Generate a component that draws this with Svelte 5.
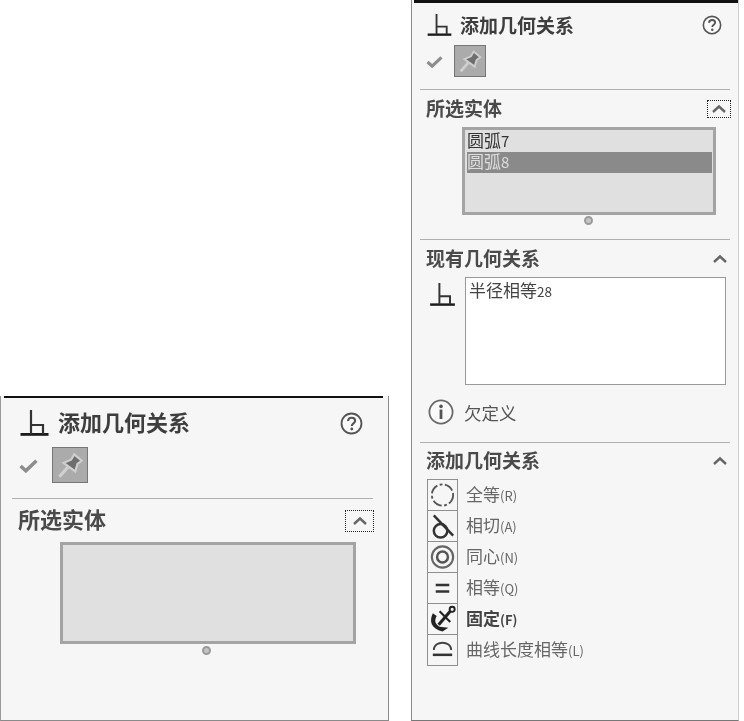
<script>
  const relations = [
    { key: 'coincident', label: '全等', hot: '(R)' },
    { key: 'tangent', label: '相切', hot: '(A)' },
    { key: 'concentric', label: '同心', hot: '(N)' },
    { key: 'equal', label: '相等', hot: '(Q)' },
    { key: 'fix', label: '固定', hot: '(F)', strong: true },
    { key: 'arc', label: '曲线长度相等', hot: '(L)' },
  ];
</script>

{#snippet relIcon()}
  <svg class="rel-icon" viewBox="0 0 28 26">
    <path d="M0 24.4H28" stroke="#1c1c1c" stroke-width="2.8" fill="none" />
    <path d="M10.5 0V24M10.5 15H22.5V24" stroke="#333" stroke-width="2.2" fill="none" />
  </svg>
{/snippet}

{#snippet helpIcon()}
  <svg class="help" viewBox="0 0 24 24">
    <circle cx="12" cy="12" r="10.4" fill="#fafafa" stroke="#555" stroke-width="1.9" />
    <path d="M8.4 9.4C8.6 7 10.2 6 12.1 6c2.2 0 3.7 1.3 3.7 3.1 0 2.6-3.5 2.8-3.5 5.4" fill="none" stroke="#555" stroke-width="2.2" />
    <circle cx="12.3" cy="17.8" r="1.5" fill="#555" />
  </svg>
{/snippet}

{#snippet actions()}
  <div class="actions">
    <svg class="check" viewBox="0 0 18 14">
      <path d="M1.5 7.5L6.5 12L16.5 2.5" fill="none" stroke="#8d8d8d" stroke-width="3.4" />
    </svg>
    <div class="pin">
      <svg viewBox="0 0 32 32">
        <path d="M6 27L14 18" stroke="#d0d0d0" stroke-width="3" fill="none" />
        <path d="M20 6L27 12L23 15L21 22L10 14L17 11Z" fill="#6e6e6e" stroke="#cfcfcf" stroke-width="2" />
      </svg>
    </div>
  </div>
{/snippet}

{#snippet chevron()}
  <svg class="chev" viewBox="0 0 16 10">
    <path d="M2 8L8 2.5L14 8" fill="none" stroke="#666" stroke-width="2.4" />
  </svg>
{/snippet}

<div class="page">
  <div class="panel large">
    <div class="topline"></div>
    <div class="head">
      {@render relIcon()}
      <span class="title">添加几何关系</span>
      {@render helpIcon()}
    </div>
    {@render actions()}
    <div class="rule"></div>
    <div class="sec-head first">
      <span class="sec-title">所选实体</span>
      <div class="collapse">{@render chevron()}</div>
    </div>
    <div class="list"></div>
    <div class="dot"></div>
  </div>

  <div class="panel small">
    <div class="topline"></div>
    <div class="head">
      {@render relIcon()}
      <span class="title">添加几何关系</span>
      {@render helpIcon()}
    </div>
    {@render actions()}
    <div class="rule"></div>
    <div class="sec-head first">
      <span class="sec-title">所选实体</span>
      <div class="collapse">{@render chevron()}</div>
    </div>
    <div class="list">
      <div class="item">圆弧<small>7</small></div>
      <div class="item sel">圆弧<small>8</small></div>
    </div>
    <div class="dot"></div>
    <div class="rule second"></div>

    <div class="sec-head plain">
      <span class="sec-title">现有几何关系</span>
      <div class="open">{@render chevron()}</div>
    </div>
    <div class="existing">
      {@render relIcon()}
      <div class="box">半径相等<small>28</small></div>
    </div>
    <div class="status">
      <svg class="info" viewBox="0 0 26 26">
        <circle cx="13" cy="13" r="11.6" fill="#fafafa" stroke="#6a6a6a" stroke-width="1.8" />
        <circle cx="13" cy="7.4" r="1.8" fill="#555" />
        <path d="M13 10.5V20" stroke="#555" stroke-width="2.8" />
      </svg>
      <span>欠定义</span>
    </div>
    <div class="rule third"></div>

    <div class="sec-head plain last">
      <span class="sec-title">添加几何关系</span>
      <div class="open">{@render chevron()}</div>
    </div>
    <div class="relations">
      {#each relations as rel}
        <div class="rel">
          <div class="rel-btn">
            <svg viewBox="0 0 30 30">
              {#if rel.key === 'coincident'}
                <circle cx="15" cy="15" r="11" fill="none" stroke="#555" stroke-width="1.9" stroke-dasharray="10 2.5 3 2.5" />
              {:else if rel.key === 'tangent'}
                <circle cx="13" cy="20" r="7" fill="none" stroke="#333" stroke-width="2.6" />
                <path d="M6 4L26 25" stroke="#333" stroke-width="2.6" />
              {:else if rel.key === 'concentric'}
                <circle cx="15" cy="15" r="11" fill="none" stroke="#666" stroke-width="2.2" />
                <circle cx="15" cy="15" r="5.6" fill="none" stroke="#555" stroke-width="2.6" />
              {:else if rel.key === 'equal'}
                <path d="M8 12H22M8 18.5H22" stroke="#333" stroke-width="2.6" />
              {:else if rel.key === 'fix'}
                <circle cx="25" cy="5" r="2.6" fill="none" stroke="#222" stroke-width="2" />
                <path d="M23 7L11 21" stroke="#222" stroke-width="3.2" />
                <path d="M12 7L23 18" stroke="#222" stroke-width="2.2" />
                <path d="M5 9C1 17 3 25 15 28L21 24L12 23C8 21 6 17 9 12Z" fill="#222" />
              {:else}
                <path d="M6 15C6 5 24 5 24 15" fill="none" stroke="#444" stroke-width="1.9" />
                <path d="M5 20H25" stroke="#333" stroke-width="2.6" />
              {/if}
            </svg>
          </div>
          <span class="rel-label" class:strong={rel.strong}>{rel.label}<small>{rel.hot}</small></span>
        </div>
      {/each}
    </div>
  </div>
</div>

<style>
  :global(body) {
    margin: 0;
    background: #fff;
  }
  .page {
    display: flex;
    align-items: flex-end;
    width: 744px;
    height: 721px;
    font-family: "Noto Sans CJK SC", "Noto Sans", sans-serif;
    filter: blur(0.45px);
  }
  .panel {
    box-sizing: border-box;
    display: flex;
    flex-direction: column;
    background: #f6f6f6;
    border: solid #8a8a8a;
    border-width: 0 1px 1px 1px;
  }
  .large {
    width: 389px;
    height: 325px;
    margin-right: 22px;
    border-left-color: #9a9a9a;
  }
  .small {
    width: 328px;
    height: 721px;
    border-right-color: #cfcfcf;
    border-bottom-color: #777;
  }
  .topline {
    background: #111;
  }
  .large .topline { height: 2px; margin: 0 5px 0 3px; }
  .small .topline { height: 3px; margin: 0 0 0 2px; }

  .head {
    display: flex;
    align-items: center;
  }
  .large .head { margin: 12px 0 0 19px; height: 26px; }
  .small .head { margin: 11px 0 0 15px; height: 22px; }
  .rel-icon { display: block; flex: none; }
  .large .rel-icon { width: 29px; height: 26px; }
  .small .rel-icon { width: 25px; height: 22px; }
  .title {
    font-weight: 700;
    color: #3e3e3e;
    white-space: nowrap;
  }
  .large .title { font-size: 22px; margin: 0 0 4px 9px; }
  .small .title { font-size: 19px; margin: 0 0 2px 8px; }
  .help { display: block; flex: none; }
  .large .help { width: 23px; height: 23px; margin-left: 150px; }
  .small .help { width: 20px; height: 20px; margin-left: 128px; }

  .actions {
    display: flex;
    align-items: center;
  }
  .large .actions { margin: 11px 0 0 18px; }
  .small .actions { margin: 9px 0 0 14px; }
  .check { display: block; }
  .large .check { width: 19px; height: 15px; margin-right: 14px; }
  .small .check { width: 17px; height: 13px; margin-right: 11px; }
  .pin {
    box-sizing: border-box;
    background: #ababab;
    border: 1px solid #777;
  }
  .pin svg { display: block; width: 100%; height: 100%; }
  .large .pin { width: 36px; height: 36px; }
  .small .pin { width: 32px; height: 32px; }

  .rule { height: 1px; background: #b0b0b0; flex: none; }
  .large .rule { margin: 15px 15px 0 11px; }
  .small .rule { margin: 12px 8px 0 8px; }
  .small .rule.second { margin-top: 14px; }
  .small .rule.third { margin-top: 17px; }

  .sec-head {
    display: flex;
    align-items: center;
    justify-content: space-between;
  }
  .large .sec-head { margin: 11px 14px 0 17px; height: 22px; }
  .small .sec-head { margin: 10px 7px 0 14px; height: 18px; }
  .small .sec-head.plain { margin-top: 10px; margin-right: 10px; height: 19px; }
  .small .sec-head.plain.last { margin-top: 9px; }
  .sec-title {
    font-weight: 700;
    color: #4a4a4a;
  }
  .large .sec-title { font-size: 22px; margin-bottom: 6px; }
  .small .sec-title { font-size: 19px; margin-bottom: 3px; }
  .small .plain .sec-title { margin-bottom: 5px; }
  .collapse {
    box-sizing: border-box;
    display: flex;
    align-items: center;
    justify-content: center;
    border: 1px dotted #222;
  }
  .large .collapse { width: 29px; height: 22px; }
  .small .collapse { width: 24px; height: 18px; }
  .open { display: flex; margin-bottom: 2px; }
  .chev { display: block; width: 16px; height: 10px; }

  .list {
    box-sizing: border-box;
    background: #e0e0e0;
    border: 3px solid #a4a4a4;
  }
  .large .list { width: 296px; height: 102px; margin: 10px 0 0 59px; }
  .small .list { width: 254px; height: 88px; margin: 9px 0 0 50px; padding: 1px 1px 0 2px; }
  .item {
    height: 21px;
    line-height: 18px;
    font-size: 17px;
    color: #333;
    white-space: nowrap;
  }
  .item small { font-size: 15px; }
  .item.sel {
    background: #8a8a8a;
    color: #ddd;
  }
  .dot {
    box-sizing: border-box;
    width: 9px;
    height: 9px;
    border-radius: 50%;
    background: #c4c4c4;
    border: 2px solid #9a9a9a;
    margin-top: 2px;
  }
  .large .dot { margin-left: 201px; }
  .small .dot { margin: 1px 0 0 172px; }

  .existing {
    display: flex;
    align-items: flex-start;
    margin: 8px 0 0 18px;
  }
  .existing .rel-icon { margin-top: 6px; width: 25px; height: 23px; }
  .box {
    box-sizing: border-box;
    width: 261px;
    height: 108px;
    margin-left: 10px;
    padding: 0 0 0 3px;
    background: #fff;
    border: 1.5px solid #999;
    font-size: 17px;
    line-height: 24px;
    color: #444;
  }
  .box small { font-size: 13.5px; }

  .status {
    display: flex;
    align-items: center;
    margin: 14px 0 0 16px;
    font-size: 17.5px;
    color: #555;
  }
  .info { display: block; width: 26px; height: 26px; margin-right: 10px; }

  .relations { margin: 8px 0 0 15px; }
  .rel {
    display: flex;
    align-items: center;
  }
  .rel-btn {
    box-sizing: border-box;
    width: 31px;
    height: 32px;
    margin-bottom: -1px;
    border: 1px solid #8f8f8f;
    background: #f6f6f6;
  }
  .rel-btn svg { display: block; width: 29px; height: 30px; }
  .rel-label {
    margin: 0 0 2px 8px;
    font-size: 17px;
    color: #666;
    white-space: nowrap;
  }
  .rel-label small { font-size: 13px; }
  .rel-label.strong {
    font-weight: 700;
    color: #444;
  }
</style>
